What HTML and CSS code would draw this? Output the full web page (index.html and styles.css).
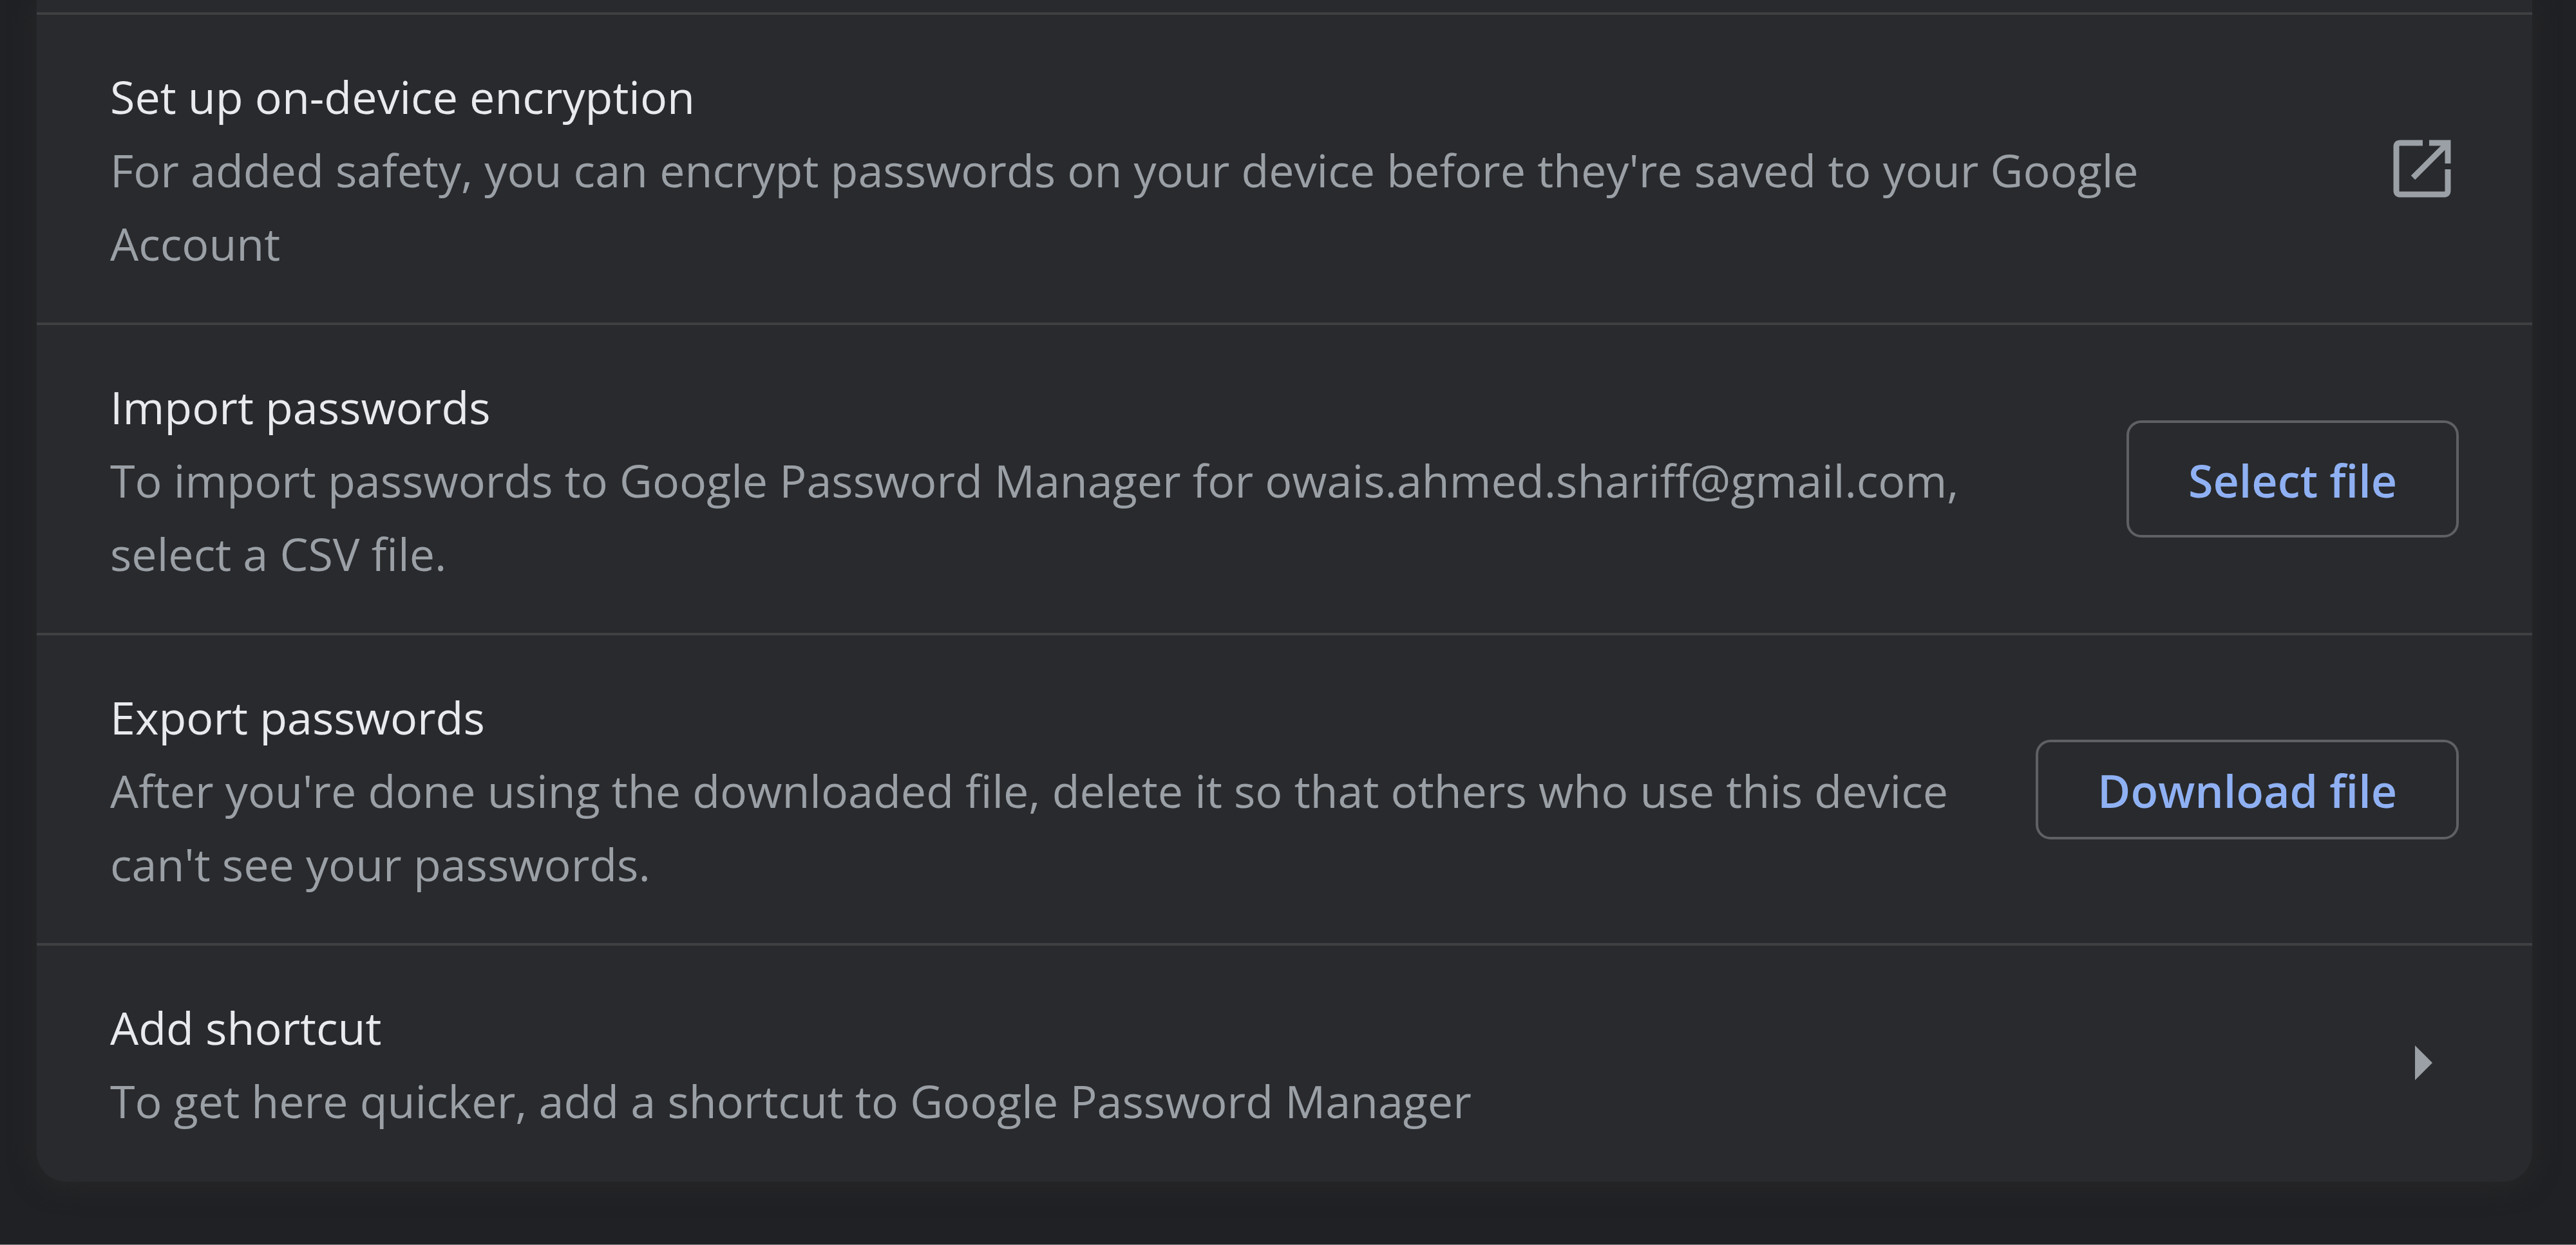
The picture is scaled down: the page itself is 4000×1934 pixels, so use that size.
FILE: index.html
```html
<!DOCTYPE html>
<html lang="en">
<head>
<meta charset="utf-8">
<title>Password settings</title>
<link rel="stylesheet" href="styles.css">
</head>
<body>
<main class="page">
  <section class="card">
    <div class="row">
      <div class="text">
        <h2 class="title">Set up on-device encryption</h2>
        <p class="desc">For added safety, you can encrypt passwords on your device before they're saved to your Google Account</p>
      </div>
      <a class="icon-button" href="#encryption" aria-label="Set up on-device encryption">
        <svg class="icon" viewBox="0 0 120 120" aria-hidden="true">
          <path d="M61 20H26Q20 20 20 26V94Q20 100 26 100H94Q100 100 100 94V61M71 20H100V52M97 23L46 74" fill="none" stroke="currentColor" stroke-width="9"/>
        </svg>
      </a>
    </div>
    <div class="row">
      <div class="text">
        <h2 class="title">Import passwords</h2>
        <p class="desc">To import passwords to Google Password Manager for owais.ahmed.shariff@gmail.com, select a CSV file.</p>
      </div>
      <button class="button button-tall" type="button">Select file</button>
    </div>
    <div class="row">
      <div class="text">
        <h2 class="title">Export passwords</h2>
        <p class="desc">After you're done using the downloaded file, delete it so that others who use this device can't see your passwords.</p>
      </div>
      <button class="button" type="button">Download file</button>
    </div>
    <div class="row">
      <div class="text">
        <h2 class="title">Add shortcut</h2>
        <p class="desc">To get here quicker, add a shortcut to Google Password Manager</p>
      </div>
      <button class="icon-button" type="button" aria-label="Add shortcut">
        <svg class="icon" viewBox="0 0 120 120" aria-hidden="true">
          <path d="M49 33L76 60L49 87Z" fill="currentColor"/>
        </svg>
      </button>
    </div>
  </section>
</main>
</body>
</html>
```
FILE: styles.css
```css
* {
  box-sizing: border-box;
}

body {
  margin: 0;
  background: #202124;
  color: #e8eaed;
  font-family: "Segoe UI", "Open Sans", "Noto Sans", sans-serif;
  font-size: 70px;
  line-height: 114px;
}

.page {
  min-height: 100vh;
  padding: 0 68px 96px 57px;
  border-bottom: 1px solid #8a8a8c;
}

.card {
  padding: 19px 0 3px;
  background: #292a2d;
  border-radius: 0 0 46px 46px;
  box-shadow: 0 6px 36px 4px #262728;
}

.row {
  display: flex;
  align-items: center;
  gap: 114px;
  padding: 66px 114px;
  border-top: 4px solid #3f4042;
}

.text {
  flex: 1;
  min-width: 0;
  padding-top: 4px;
}

.title,
.desc {
  margin: 0;
  font-size: inherit;
  font-weight: 400;
}

.desc {
  color: #9aa0a6;
}

.button {
  flex: none;
  height: 155px;
  padding: 4px 92px 0;
  border: 4px solid #5f6063;
  border-radius: 23px;
  background: transparent;
  color: #8fb1f4;
  font: inherit;
  font-weight: 600;
}

.button-tall {
  height: 182px;
}

.icon-button {
  display: flex;
  flex: none;
  align-items: center;
  justify-content: center;
  width: 204px;
  height: 204px;
  margin-right: -45px;
  padding: 0;
  border: 0;
  background: transparent;
  color: #9aa0a6;
}

.icon {
  width: 120px;
  height: 120px;
}
```
